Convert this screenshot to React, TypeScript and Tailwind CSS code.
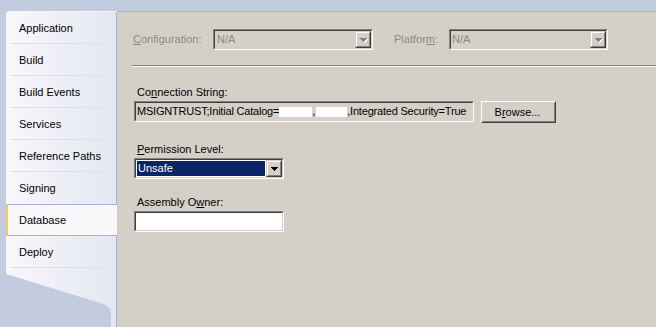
import React from "react";

function Arrow({ disabled }: { disabled?: boolean }) {
  const rects = [
    [0, 0, 7],
    [1, 1, 5],
    [2, 2, 3],
    [3, 3, 1],
  ];
  return (
    <svg width="8" height="5" viewBox="0 0 8 5" shapeRendering="crispEdges">
      {disabled &&
        rects.map(([x, y, w], i) => (
          <rect key={"s" + i} x={x + 1} y={y + 1} width={w} height={1} fill="#ffffff" />
        ))}
      {rects.map(([x, y, w], i) => (
        <rect key={i} x={x} y={y} width={w} height={1} fill={disabled ? "#808080" : "#000000"} />
      ))}
    </svg>
  );
}

function DropBtn({ disabled }: { disabled?: boolean }) {
  return (
    <div className="flex h-full w-[16px] border border-t-[#d4d0c8] border-l-[#d4d0c8] border-r-[#404040] border-b-[#404040]">
      <div className="flex flex-1 items-center justify-center border border-t-white border-l-white border-r-[#808080] border-b-[#808080] bg-[#d4d0c8] pl-[1px] pt-[1px]">
        <Arrow disabled={disabled} />
      </div>
    </div>
  );
}

function Tab({ label, selected, noSep }: { label: string; selected?: boolean; noSep?: boolean }) {
  if (selected) {
    return (
      <div className="flex h-[32px] items-center border-t border-b border-l-2 border-t-[#a5b1d3] border-b-[#a5b1d3] border-l-[#f3c763] bg-[#f9f8fb] pl-[11px] pt-[1px] text-black">
        {label}
      </div>
    );
  }
  return (
    <div className="flex h-[32px] flex-col border-r border-r-[#a5b1d3]">
      <div className="flex flex-1 items-center pl-[13px] pt-[1px] text-black">{label}</div>
      <div className={noSep ? "h-px" : "ml-[5px] mr-[6px] h-px bg-[#dde0eb]"} />
    </div>
  );
}

export default function App() {
  const tabs = [
    "Application",
    "Build",
    "Build Events",
    "Services",
    "Reference Paths",
    "Signing",
    "Database",
    "Deploy",
  ];
  return (
    <div className="flex h-[327px] w-[656px] flex-col overflow-hidden bg-[#c3cbdf] font-['Liberation_Sans',Arial,sans-serif] text-[11px] leading-[13px]">
      <div className="h-[12px]" />
      <div className="flex flex-1">
        {/* Sidebar */}
        <div className="flex w-[117px] flex-col pl-[6px]">
          <div className="flex flex-1 flex-col rounded-tl-[4px] border-t border-t-[#f4f5fa] bg-linear-to-r from-[#f8f7fb] to-[#e4e7f1]">
            {tabs.map((t, i) => (
              <Tab key={t} label={t} selected={t === "Database"} noSep={tabs[i + 1] === "Database"} />
            ))}
            <div className="flex-1 border-r border-r-[#a5b1d3]">
              <svg width="110" height="59" viewBox="0 0 110 59" className="block">
                <path d="M0 5 Q0 6 2 6.5 L94 35 Q105 38 105 45 L105 59 L0 59 Z" fill="#c3cbdf" />
              </svg>
            </div>
          </div>
        </div>

        {/* Content */}
        <div className="flex flex-1 flex-col border-t border-t-[#a5b1d3] bg-[#d4d0c8] pt-[17px]">
          {/* Config row */}
          <div className="flex items-center pl-[16px]">
            <div className="w-[80px] text-[#8a8a8a]">
              <u>C</u>onfiguration:
            </div>
            <div className="flex h-[21px] w-[160px] border border-t-[#808080] border-l-[#808080] border-r-white border-b-white">
              <div className="flex flex-1 border border-t-[#404040] border-l-[#404040] border-r-[#d4d0c8] border-b-[#d4d0c8] bg-[#d4d0c8]">
                <div className="flex flex-1 items-center pl-[2px] text-[#8a8a8a]">N/A</div>
                <DropBtn disabled />
              </div>
            </div>
            <div className="ml-[21px] w-[55px] text-[#8a8a8a]">
              Platfor<u>m</u>:
            </div>
            <div className="flex h-[21px] w-[159px] border border-t-[#808080] border-l-[#808080] border-r-white border-b-white">
              <div className="flex flex-1 border border-t-[#404040] border-l-[#404040] border-r-[#d4d0c8] border-b-[#d4d0c8] bg-[#d4d0c8]">
                <div className="flex flex-1 items-center pl-[1px] text-[#8a8a8a]">N/A</div>
                <DropBtn disabled />
              </div>
            </div>
          </div>

          {/* Separator */}
          <div className="ml-[15px] mt-[15px] h-[2px] border-t border-b border-t-[#808080] border-b-white" />

          <div className="flex flex-col pl-[17px]">
            {/* Connection string */}
            <div className="ml-[3px] mt-[19px] text-black">
              Co<u>n</u>nection String:
            </div>
            <div className="mt-[2px] flex items-start">
              <div className="flex h-[21px] w-[340px] border border-t-[#808080] border-l-[#808080] border-r-white border-b-white">
                <div className="flex flex-1 items-center overflow-hidden whitespace-nowrap border border-t-[#404040] border-l-[#404040] border-r-[#d4d0c8] border-b-[#d4d0c8] bg-[#d4d0c8] pl-[1px] tracking-[-0.2px] text-black">
                  <span>MSIGNTRUST;Initial Catalog=</span>
                  <span className="inline-block h-[10px] w-[33px] bg-white" />
                  <span className="w-[4px] overflow-hidden">,</span>
                  <span className="inline-block h-[10px] w-[31px] bg-white" />
                  <span>,Integrated Security=True</span>
                </div>
              </div>
              <div className="ml-[7px] flex h-[22px] w-[75px] border border-t-white border-l-white border-r-[#404040] border-b-[#404040]">
                <div className="flex flex-1 items-center justify-center border border-t-[#d4d0c8] border-l-[#d4d0c8] border-r-[#808080] border-b-[#808080] bg-[#d4d0c8] pr-[2px] text-black">
                  B<u>r</u>owse...
                </div>
              </div>
            </div>

            {/* Permission level */}
            <div className="ml-[3px] mt-[20px] text-black">
              <u>P</u>ermission Level:
            </div>
            <div className="mt-[2px] flex h-[21px] w-[150px] border border-t-[#808080] border-l-[#808080] border-r-white border-b-white">
              <div className="flex flex-1 border border-t-[#404040] border-l-[#404040] border-r-[#d4d0c8] border-b-[#d4d0c8] bg-white">
                <div className="m-px flex flex-1 items-center bg-[#0a246a] pl-[1px] text-white">Unsafe</div>
                <DropBtn />
              </div>
            </div>

            {/* Assembly owner */}
            <div className="ml-[3px] mt-[17px] text-black">
              Assembly O<u>w</u>ner:
            </div>
            <div className="mt-[2px] flex h-[21px] w-[150px] border border-t-[#808080] border-l-[#808080] border-r-white border-b-white">
              <div className="flex-1 border border-t-[#404040] border-l-[#404040] border-r-[#d4d0c8] border-b-[#d4d0c8] bg-white" />
            </div>
          </div>
        </div>
      </div>
    </div>
  );
}
